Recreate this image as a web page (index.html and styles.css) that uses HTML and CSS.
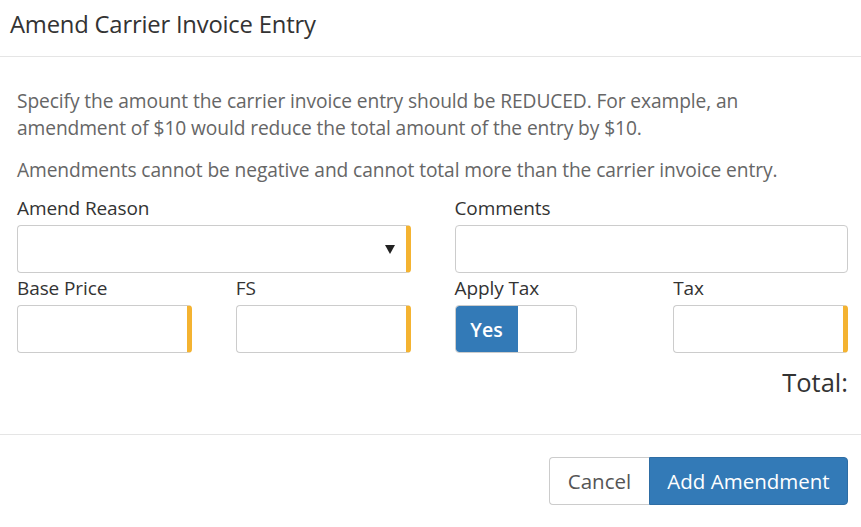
FILE: index.html
```html
<!DOCTYPE html>
<html>
<head>
<meta charset="utf-8">
<link rel="stylesheet" href="styles.css">
</head>
<body>
<div class="modal">
  <div class="modal-header">
    <h4 class="title">Amend Carrier Invoice Entry</h4>
  </div>
  <div class="modal-body">
    <p class="note">Specify the amount the carrier invoice entry should be REDUCED. For example, an amendment of $10 would reduce the total amount of the entry by $10.</p>
    <p class="note second">Amendments cannot be negative and cannot total more than the carrier invoice entry.</p>
    <div class="grid">
      <div class="field span2">
        <label class="lbl">Amend Reason</label>
        <div class="input required select"><svg class="arrow" width="10" height="9" viewBox="0 0 10 9"><path d="M0 0H10L5 9Z" fill="#222"/></svg></div>
      </div>
      <div class="field span2">
        <label class="lbl">Comments</label>
        <div class="input"></div>
      </div>
      <div class="field">
        <label class="lbl">Base Price</label>
        <div class="input required"></div>
      </div>
      <div class="field">
        <label class="lbl">FS</label>
        <div class="input required"></div>
      </div>
      <div class="field">
        <label class="lbl">Apply Tax</label>
        <div class="toggle"><span class="toggle-on">Yes</span></div>
      </div>
      <div class="field">
        <label class="lbl">Tax</label>
        <div class="input required"></div>
      </div>
    </div>
    <div class="total">Total:</div>
  </div>
  <div class="modal-footer">
    <button class="btn btn-default">Cancel</button><button class="btn btn-primary">Add Amendment</button>
  </div>
</div>
</body>
</html>
```
FILE: styles.css
```css
* { box-sizing: border-box; }
html, body {
  margin: 0;
  padding: 0;
  background: #fff;
}
body {
  font-family: "Open Sans", "Noto Sans", sans-serif;
  color: #333;
  width: 861px;
  height: 527px;
  overflow: hidden;
}
.modal-header {
  height: 57px;
  border-bottom: 1px solid #e5e5e5;
  padding: 9px 10px 0 10px;
}
.title {
  margin: 0;
  font-size: 23.8px;
  font-weight: 400;
  line-height: 30px;
  color: #333;
  letter-spacing: -0.2px;
}
.modal-body {
  padding: 30px 13px 0 17px;
  height: 378px;
  border-bottom: 1px solid #e5e5e5;
}
.note {
  margin: 0;
  max-width: 790px;
  font-size: 19.2px;
  line-height: 27px;
  color: #666;
  letter-spacing: -0.1px;
}
.note.second {
  margin-top: 15px;
}
.grid {
  display: grid;
  grid-template-columns: repeat(4, 1fr);
  column-gap: 44px;
  margin-top: 12px;
}
.span2 { grid-column: span 2; }
.lbl {
  display: block;
  font-size: 19px;
  line-height: 26px;
  height: 26px;
  color: #333;
  margin: 0 0 4px 0;
  letter-spacing: -0.1px;
}
.field { display: block; }
.field:nth-child(n+3) { padding-top: 2px; }
.input {
  height: 48px;
  border: 1px solid #ccc;
  border-radius: 4px;
  background: #fff;
}
.input.required {
  border-right: 5px solid #f4b331;
}
.select {
  display: flex;
  align-items: center;
  justify-content: flex-end;
  padding-right: 11px;
}
.arrow {
  display: block;
}
.toggle {
  width: 122px;
  height: 48px;
  border: 1px solid #ccc;
  border-radius: 4px;
  display: flex;
  overflow: hidden;
}
.toggle-on {
  width: 62px;
  background: #337ab7;
  color: #fff;
  font-size: 19.5px;
  font-weight: 600;
  display: flex;
  align-items: center;
  justify-content: center;
  border-radius: 3px 0 0 3px;
}
.total {
  text-align: right;
  font-size: 25.5px;
  line-height: 32px;
  margin-top: 13px;
  color: #333;
}
.modal-footer {
  display: flex;
  justify-content: flex-end;
  padding: 22px 13px 0 0;
}
.btn {
  font-family: "Open Sans", "Noto Sans", sans-serif;
  font-size: 20.5px;
  height: 48px;
  border: 1px solid #ccc;
  margin: 0;
  padding: 0;
  cursor: pointer;
}
.btn-default {
  background: #fff;
  color: #555;
  border-radius: 4px 0 0 4px;
  width: 100px;
  border-right: none;
}
.btn-primary {
  background: #337ab7;
  border-color: #2e6da4;
  color: #fff;
  border-radius: 0 4px 4px 0;
  width: 199px;
}
```
